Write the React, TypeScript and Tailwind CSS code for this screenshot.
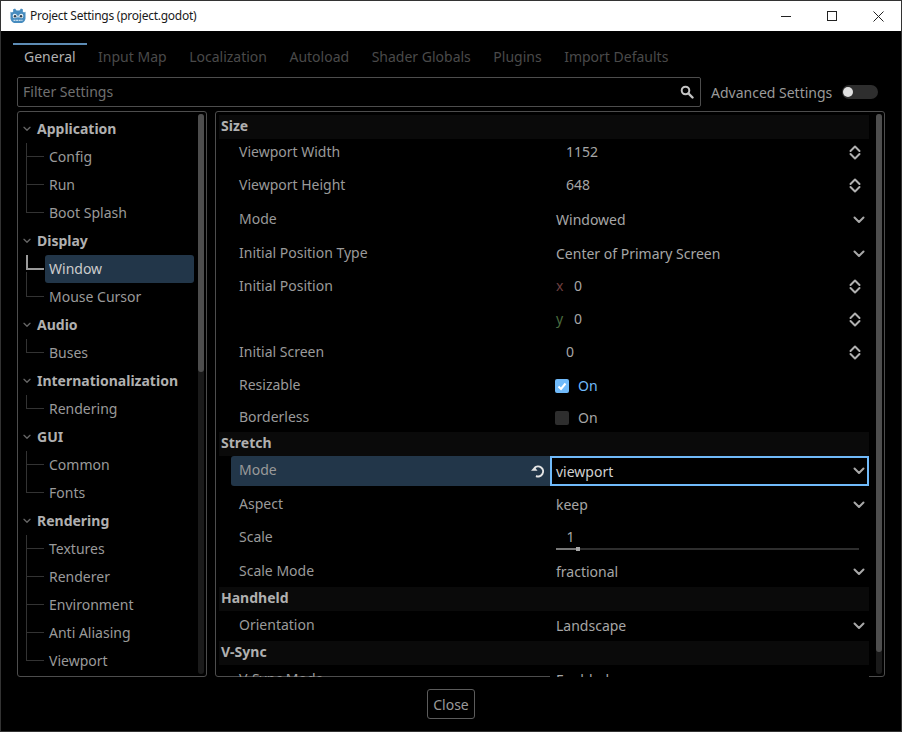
import type { ReactNode } from "react"

const font = { fontFamily: '"Noto Sans", sans-serif' }

const tabs = ["General", "Input Map", "Localization", "Autoload", "Shader Globals", "Plugins", "Import Defaults"]

const tree = [
    { name: "Application", items: ["Config", "Run", "Boot Splash"] },
    { name: "Display", items: ["Window", "Mouse Cursor"] },
    { name: "Audio", items: ["Buses"] },
    { name: "Internationalization", items: ["Rendering"] },
    { name: "GUI", items: ["Common", "Fonts"] },
    { name: "Rendering", items: ["Textures", "Renderer", "Environment", "Anti Aliasing", "Viewport"] },
]

function Chevron({ className }: { className?: string }) {
    return (
        <svg width="12" height="8" viewBox="0 0 12 8" className={className}>
            <path d="M1.500 1.500 6 6l4.500-4.500" fill="none" stroke="#a8a8a8" strokeWidth="2" strokeLinecap="round" strokeLinejoin="round" />
        </svg>
    )
}

function Updown() {
    return (
        <svg width="12" height="15" viewBox="0 0 12 15">
            <path d="M1.500 6 6 1.500 10.500 6M1.500 9 6 13.500 10.500 9" fill="none" stroke="#b0b0b0" strokeWidth="2" strokeLinecap="round" strokeLinejoin="round" />
        </svg>
    )
}

function GodotLogo() {
    return (
        <svg width="16" height="16" viewBox="0 0 16 16">
            <path d="M5 .500 6.500 2.500h3L11 .500l2 1-.3 2 1.300 1 1.500-.8V10.500c-.3 2-1.500 3.500-3.500 4.500H4c-2-1-3.200-2.500-3.500-4.500V3.700l1.500.8 1.300-1-.3-2z" fill="#478cbf" />
            <circle cx="4.800" cy="8" r="2.200" fill="#e6eff6" />
            <circle cx="11.200" cy="8" r="2.200" fill="#e6eff6" />
            <circle cx="5" cy="8.200" r="1.200" fill="#2f3f4c" />
            <circle cx="11" cy="8.200" r="1.200" fill="#2f3f4c" />
            <rect x="7.300" y="7.500" width="1.400" height="2" fill="#e6eff6" />
            <path d="M3.500 12.300h9" stroke="#c9deed" strokeWidth="1.300" strokeDasharray="2 .6" />
        </svg>
    )
}

function TreeItem({ name, last, selected }: { name: string, last: boolean, selected: boolean }) {
    return (
        <div className="relative h-[28px] pl-[27px] pr-[12px]">
            {/* guide lines */}
            <span className={`absolute left-[8px] top-0 w-px bg-[#333333] ${last ? "h-[14px]" : "h-[28px]"} ${selected ? "hidden" : ""}`} />
            <span className={`absolute left-[8px] top-[13px] h-px w-[18px] bg-[#333333] ${selected ? "hidden" : ""}`} />
            {selected && <span className="absolute left-[8px] top-0 h-[15px] w-[18px] border-b-2 border-l-2 border-[#9a9a9a]" />}
            {selected && <span className="absolute left-[8px] top-[17px] h-[11px] w-px bg-[#333333]" />}
            <div className={`h-[28px] rounded-[3px] pl-[4px] leading-[28px] ${selected ? "bg-[#223649] text-[#cccccc]" : "text-[#9a9a9a]"}`}>{name}</div>
        </div>
    )
}

function Dropdown({ text, pad, active, noArrow }: { text: string, pad: string, active?: boolean, noArrow?: boolean }) {
    return (
        <div className={`flex w-full items-start justify-between pl-[6px] pr-[4px] leading-[20px] text-[#a6a6a6] ${pad} ${active ? "bg-black" : ""}`}>
            <span>{text}</span>
            {!noArrow && <Chevron className="mt-[6px]" />}
        </div>
    )
}

function Spin({ text, axis, axisColor }: { text: string, axis?: string, axisColor?: string }) {
    return (
        <div className="flex w-full items-start justify-between pl-[6px] pr-[8px] pt-[3px] leading-[20px] text-[#a6a6a6]">
            <span className="flex">
                <span className={`w-[10px] ${axisColor ?? ""}`}>{axis}</span>
                <span className={axis ? "ml-[8px]" : ""}>{text}</span>
            </span>
            <span className="mt-[3px]"><Updown /></span>
        </div>
    )
}

function Check({ on, pad }: { on: boolean, pad: string }) {
    return (
        <div className={`flex items-start pl-[5px] leading-[20px] text-[#a6a6a6] ${pad}`}>
            <span className={`mt-[3px] flex h-[14px] w-[14px] items-center justify-center rounded-[2px] ${on ? "bg-[#70bafa]" : "bg-[#2e2e2e]"}`}>
                {on && (
                    <svg width="10" height="10" viewBox="0 0 10 10">
                        <path d="M1.500 5.500 4 8l4.500-5.500" fill="none" stroke="#fff" strokeWidth="2" />
                    </svg>
                )}
            </span>
            <span className={`ml-[9px] ${on ? "text-[#70bafa]" : ""}`}>On</span>
        </div>
    )
}

function Section({ name }: { name: string }) {
    return <div className="h-[24px] bg-[#0a0a0a] pl-[2px] font-bold leading-[22px] text-[#b0b0b0]">{name}</div>
}

function Row({ label, h, pad, children }: { label?: string, h: string, pad: string, children?: ReactNode }) {
    return (
        <div className={`flex items-start text-[#9a9a9a] ${h}`}>
            <div className={`ml-[12px] w-[319px] pl-[8px] leading-[20px] ${pad}`}>{label}</div>
            <div className="w-[319px]">{children}</div>
        </div>
    )
}

export default function App() {
    return (
        <div className="box-border h-[732px] w-[902px] overflow-hidden border border-[#333333] bg-black text-[14px]" style={font}>
            <div className="flex h-[30px] items-center bg-white text-[12px] text-[#1a1a1a]">
                <div className="ml-[9px]"><GodotLogo /></div>
                <span className="ml-[4px] tracking-[-0.25px]">Project Settings (project.godot)</span>
                <div className="ml-auto mr-[17px] flex items-center gap-[36px]">
                    <span className="h-px w-[10px] bg-[#222222]" />
                    <span className="h-[10px] w-[10px] border border-[#222222]" />
                    <svg width="11" height="11" viewBox="0 0 11 11">
                        <path d="M.5.500l10 10M10.500.500l-10 10" stroke="#222222" />
                    </svg>
                </div>
            </div>

            <div className="ml-[12px] mt-[12px] flex h-[28px] gap-[0.5px]">
                {tabs.map((t, i) => (
                    <div key={t} className={`h-[28px] border-t-2 px-[11px] leading-[24px] ${i === 0 ? "border-[#5d8cb5] text-[#b0b0b0]" : "border-transparent text-[#4a4a4a]"}`}>{t}</div>
                ))}
            </div>

            <div className="ml-[16px] mt-[6px] flex h-[30px] items-center">
                <div className="flex h-[30px] w-[684px] items-center justify-between rounded-[2px] border border-[#4d4d4d] pb-[2px] pl-[5px] pr-[6px] text-[#707070]">
                    <span>Filter Settings</span>
                    <svg width="14" height="14" viewBox="0 0 14 14" className="mt-[2px]">
                        <circle cx="5.500" cy="5.500" r="3.800" fill="none" stroke="#c4c4c4" strokeWidth="2" />
                        <path d="M8.500 8.500 12.500 12.500" stroke="#c4c4c4" strokeWidth="2.400" strokeLinecap="round" />
                    </svg>
                </div>
                <span className="ml-[10px] text-[#9a9a9a]">Advanced Settings</span>
                <span className="ml-[10px] flex h-[14px] w-[36px] items-center rounded-full bg-[#2e2e2e]">
                    <span className="ml-[1px] h-[10px] w-[10px] rounded-full bg-[#e0e0e0]" />
                </span>
            </div>

            <div className="ml-[16px] mt-[4px] flex h-[566px] gap-[8px]">
                <div className="relative h-[566px] w-[190px] rounded-[3px] border border-[#4d4d4d]">
                    <div className="h-[564px] overflow-hidden pt-[3px]">
                        {tree.map(g => (
                            <div key={g.name}>
                                <div className="flex h-[28px] items-center pb-[2px] font-bold text-[#b0b0b0]">
                                    <Chevron className="ml-[5px] mr-[6px] mt-[2px] h-[6px] w-[8px] opacity-60" />
                                    {g.name}
                                </div>
                                {g.items.map((it, i) => (
                                    <TreeItem key={it} name={it} last={i === g.items.length - 1} selected={it === "Window"} />
                                ))}
                            </div>
                        ))}
                    </div>
                    <div className="absolute right-[2px] top-[2px] h-[560px] w-[6px] rounded-[3px] bg-[#1a1a1a]">
                        <div className="h-[258px] w-[6px] rounded-[3px] bg-[#4d4d4d]" />
                    </div>
                </div>

                <div className="relative h-[566px] w-[670px] rounded-[3px] border border-[#4d4d4d]">
                    <div className="mx-[3px] h-[565px] overflow-hidden pt-[3px]">
                        <div className="w-[650px]">
                            <Section name="Size" />
                            <Row label="Viewport Width" h="h-[33px]" pad="pt-[3px]"><Spin text="1152" axis="" /></Row>
                            <Row label="Viewport Height" h="h-[34px]" pad="pt-[3px]"><Spin text="648" axis="" /></Row>
                            <Row label="Mode" h="h-[34px]" pad="pt-[3px]"><Dropdown text="Windowed" pad="pt-[4px]" /></Row>
                            <Row label="Initial Position Type" h="h-[33px]" pad="pt-[3px]"><Dropdown text="Center of Primary Screen" pad="pt-[4px]" /></Row>
                            <Row label="Initial Position" h="h-[33px]" pad="pt-[3px]"><Spin text="0" axis="x" axisColor="text-[#6e3f3f]" /></Row>
                            <Row h="h-[33px]" pad="pt-[3px]"><Spin text="0" axis="y" axisColor="text-[#4a6b3f]" /></Row>
                            <Row label="Initial Screen" h="h-[33px]" pad="pt-[3px]"><Spin text="0" axis="" /></Row>
                            <Row label="Resizable" h="h-[32px]" pad="pt-[3px]"><Check on pad="pt-[4px]" /></Row>
                            <Row label="Borderless" h="h-[28px]" pad="pt-[3px]"><Check on={false} pad="pt-[4px]" /></Row>
                            <Section name="Stretch" />
                            <div className="flex h-[34px] items-start text-[#9a9a9a]">
                                <div className="ml-[12px] flex h-[30px] w-[319px] items-center justify-between rounded-l-[3px] bg-[#223649] pb-[3px] pl-[8px] pr-[4px]">
                                    <span>Mode</span>
                                    <svg width="15" height="14" viewBox="0 0 15 14" className="mt-[3px]">
                                        <path d="M5 12a5 5 0 1 0-1.500-8" fill="none" stroke="#e4e4e4" strokeWidth="2" />
                                        <path d="M0 6.800H6.500L3.500 2.800z" fill="#e4e4e4" />
                                    </svg>
                                </div>
                                <div className="flex h-[30px] w-[319px] items-center justify-between border-2 border-[#70bafa] pl-[4px] pr-[2px] text-[#d0d0d0]">
                                    <span>viewport</span>
                                    <Chevron />
                                </div>
                            </div>
                            <Row label="Aspect" h="h-[33px]" pad="pt-[4px]"><Dropdown text="keep" pad="pt-[5px]" /></Row>
                            <Row label="Scale" h="h-[34px]" pad="pt-[4px]">
                                <div className="pl-[6px] pr-[10px] pt-[4px]">
                                    <div className="w-[29px] text-center leading-[20px] text-[#a6a6a6]">1</div>
                                    <div className="mt-[1px] flex h-[2px] items-center bg-[#2e2e2e]">
                                        <span className="h-[2px] w-[20px] bg-[#777777]" />
                                        <span className="h-[4px] w-[4px] bg-[#a8a8a8]" />
                                    </div>
                                </div>
                            </Row>
                            <Row label="Scale Mode" h="h-[30px]" pad="pt-[4px]"><Dropdown text="fractional" pad="pt-[5px]" /></Row>
                            <Section name="Handheld" />
                            <Row label="Orientation" h="h-[30px]" pad="pt-[4px]"><Dropdown text="Landscape" pad="pt-[5px]" /></Row>
                            <Section name="V-Sync" />
                            <Row label="V-Sync Mode" h="h-[30px]" pad="pt-[4px]"><Dropdown text="Enabled" pad="pt-[5px]" active noArrow /></Row>
                        </div>
                    </div>
                    <div className="absolute right-[2px] top-[2px] h-[560px] w-[6px] rounded-[3px] bg-[#1a1a1a]">
                        <div className="h-[538px] w-[6px] rounded-[3px] bg-[#4d4d4d]" />
                    </div>
                </div>
            </div>

            <div className="mt-[12px] flex justify-center">
                <div className="flex h-[30px] w-[48px] items-center justify-center rounded-[3px] border border-[#5c5c5c] text-[#9a9a9a]">Close</div>
            </div>
        </div>
    )
}
